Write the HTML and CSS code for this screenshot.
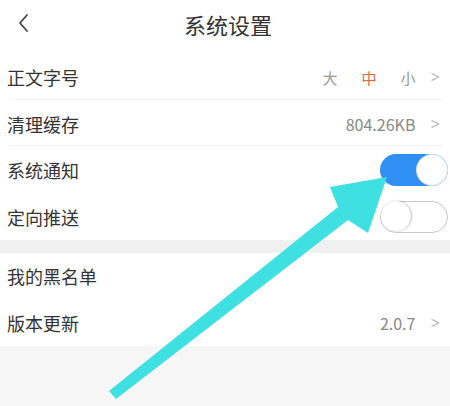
FILE: index.html
```html
<!DOCTYPE html>
<html lang="zh-CN">
<head>
<meta charset="utf-8">
<link rel="stylesheet" href="styles.css">
</head>
<body>
<div class="page">
  <header class="topbar">
    <svg class="back" width="14" height="20" viewBox="0 0 14 20"><polyline points="10,2 3,10 10,18" fill="none" stroke="#444" stroke-width="1.8" stroke-linecap="round" stroke-linejoin="round"/></svg>
    <h1 class="title">系统设置</h1>
  </header>
  <section class="group">
    <div class="row sep">
      <span class="label">正文字号</span>
      <span class="right"><span class="opt">大</span><span class="opt active">中</span><span class="opt">小</span><span class="chev">&gt;</span></span>
    </div>
    <div class="row sep">
      <span class="label">清理缓存</span>
      <span class="right"><span class="val">804.26KB</span><span class="chev">&gt;</span></span>
    </div>
    <div class="row">
      <span class="label">系统通知</span>
      <span class="toggle on"><span class="knob"></span></span>
    </div>
    <div class="row">
      <span class="label">定向推送</span>
      <span class="toggle off"><span class="knob"></span></span>
    </div>
  </section>
  <div class="band"></div>
  <section class="group">
    <div class="row">
      <span class="label">我的黑名单</span>
    </div>
    <div class="row">
      <span class="label">版本更新</span>
      <span class="right"><span class="val">2.0.7</span><span class="chev">&gt;</span></span>
    </div>
  </section>
  <div class="footer"></div>
  <svg class="arrow" width="450" height="406" viewBox="0 0 450 406">
    <polygon points="109,391 338,207 330,187 387,177 368,233 348,220 116,399" fill="#3ee0e2"/>
  </svg>
</div>
</body>
</html>
```
FILE: styles.css
```css
* { box-sizing: border-box; }
html, body { margin: 0; padding: 0; background: #fff; }
body { font-family: "Noto Sans CJK SC", "Noto Sans", sans-serif; color: #333; }
.page { position: relative; width: 450px; height: 406px; overflow: hidden; display: flex; flex-direction: column; }
.topbar { height: 54px; display: flex; align-items: center; justify-content: center; position: relative; flex: none; }
.back { position: absolute; left: 17px; top: 13px; }
.title { margin: 0; font-size: 22px; font-weight: 400; color: #333; line-height: 1; padding-left: 6px; margin-top: -6px; }
.group { flex: none; }
.row { height: 46.5px; display: flex; align-items: center; justify-content: space-between; padding: 0 2px 0 7px; position: relative; }
.row.sep::after { content: ""; position: absolute; left: 10px; right: 7px; bottom: 1px; height: 1px; background: #f2f2f2; }
.label { font-size: 18px; color: #333; line-height: 1; }
.right { display: flex; align-items: center; padding-right: 6px; }
.opt { font-size: 15px; color: #999; margin-left: 24px; line-height: 1; }
.opt:first-child { margin-left: 0; }
.opt.active { color: #e2643f; }
.val { font-size: 16px; color: #888; line-height: 1; }
.chev { font-size: 15px; color: #bbb; margin-left: 14px; font-family: "DejaVu Sans", sans-serif; transform: scaleX(0.8); }
.toggle { width: 68px; height: 32px; border-radius: 16px; position: relative; display: block; }
.toggle.on { background: #2f8ff2; }
.toggle.off { background: #fff; border: 1.5px solid #c8c8c8; }
.knob { position: absolute; top: 1px; width: 30px; height: 30px; border-radius: 50%; background: #fff; }
.toggle.on .knob { right: 1px; box-shadow: 0 0 0 1px #d8e2ec; }
.toggle.off .knob { left: 0; top: -0.5px; width: 30px; height: 30px; box-shadow: 1px 0 2px rgba(0,0,0,0.25); }
.band { height: 13px; background: #f0f0f0; flex: none; }
.footer { flex: 1; background: #f6f6f6; }
.arrow { position: absolute; left: 0; top: 0; pointer-events: none; }
```
